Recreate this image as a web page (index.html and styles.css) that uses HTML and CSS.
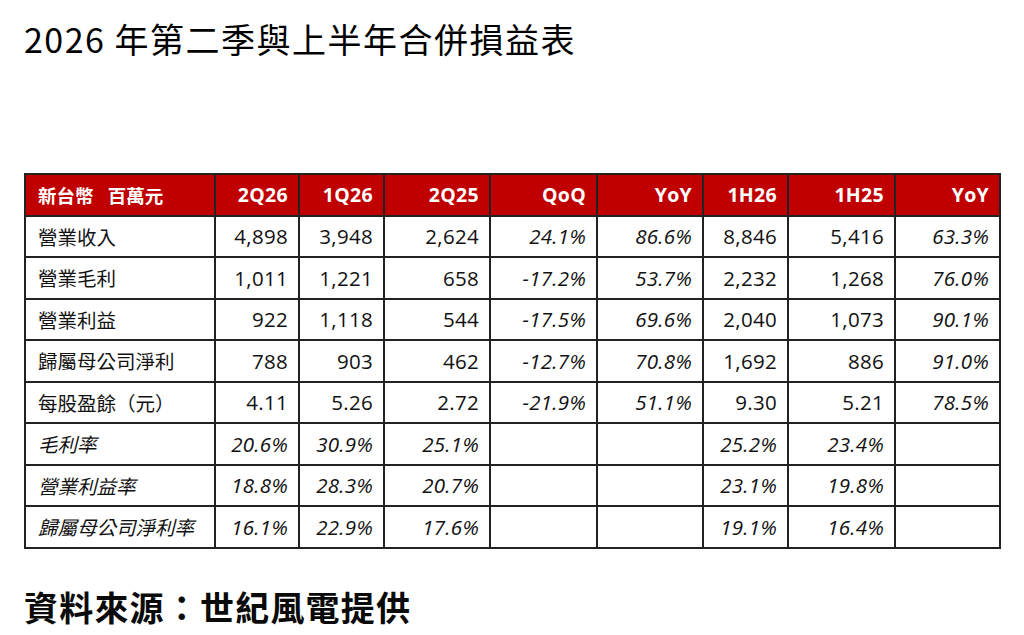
FILE: index.html
```html
<!DOCTYPE html>
<html lang="zh-Hant">
<head>
<meta charset="utf-8">
<title>2026 年第二季與上半年合併損益表</title>
<link rel="stylesheet" href="styles.css">
</head>
<body>
<div class="page">
  <h1 class="title">2026 年第二季與上半年合併損益表</h1>
  <table class="pl">
    <colgroup>
      <col class="c-label"><col class="c-q"><col class="c-q2"><col class="c-w"><col class="c-w2"><col class="c-w"><col class="c-q2"><col class="c-w2"><col class="c-w3">
    </colgroup>
    <thead>
      <tr>
        <th class="label">新台幣 百萬元</th>
        <th>2Q26</th><th>1Q26</th><th>2Q25</th><th>QoQ</th><th>YoY</th><th>1H26</th><th>1H25</th><th>YoY</th>
      </tr>
    </thead>
    <tbody>
      <tr><td class="label">營業收入</td><td>4,898</td><td>3,948</td><td>2,624</td><td class="it">24.1%</td><td class="it">86.6%</td><td>8,846</td><td>5,416</td><td class="it">63.3%</td></tr>
      <tr><td class="label">營業毛利</td><td>1,011</td><td>1,221</td><td>658</td><td class="it">-17.2%</td><td class="it">53.7%</td><td>2,232</td><td>1,268</td><td class="it">76.0%</td></tr>
      <tr><td class="label">營業利益</td><td>922</td><td>1,118</td><td>544</td><td class="it">-17.5%</td><td class="it">69.6%</td><td>2,040</td><td>1,073</td><td class="it">90.1%</td></tr>
      <tr><td class="label">歸屬母公司淨利</td><td>788</td><td>903</td><td>462</td><td class="it">-12.7%</td><td class="it">70.8%</td><td>1,692</td><td>886</td><td class="it">91.0%</td></tr>
      <tr><td class="label">每股盈餘（元）</td><td>4.11</td><td>5.26</td><td>2.72</td><td class="it">-21.9%</td><td class="it">51.1%</td><td>9.30</td><td>5.21</td><td class="it">78.5%</td></tr>
      <tr class="ratio"><td class="label">毛利率</td><td>20.6%</td><td>30.9%</td><td>25.1%</td><td></td><td></td><td>25.2%</td><td>23.4%</td><td></td></tr>
      <tr class="ratio"><td class="label">營業利益率</td><td>18.8%</td><td>28.3%</td><td>20.7%</td><td></td><td></td><td>23.1%</td><td>19.8%</td><td></td></tr>
      <tr class="ratio"><td class="label">歸屬母公司淨利率</td><td>16.1%</td><td>22.9%</td><td>17.6%</td><td></td><td></td><td>19.1%</td><td>16.4%</td><td></td></tr>
    </tbody>
  </table>
  <p class="source">資料來源：世紀風電提供</p>
</div>
</body>
</html>
```
FILE: styles.css
```css
html, body {
  margin: 0;
  padding: 0;
  background: #ffffff;
}
.page {
  padding: 19px 0 0 24px;
  color: #111111;
  font-family: "Noto Sans CJK TC", sans-serif;
}
.title {
  margin: 0;
  font-size: 34px;
  font-weight: 400;
  line-height: 40px;
  letter-spacing: 1.5px;
  color: #000000;
}
.pl {
  margin-top: 114px;
  width: 975px;
  table-layout: fixed;
  border-collapse: collapse;
  font-family: "Open Sans", "Noto Sans CJK TC", sans-serif;
  font-size: 20.5px;
}
.c-label { width: 190px; }
.c-q { width: 84px; }
.c-q2 { width: 85px; }
.c-w { width: 106px; }
.c-w2 { width: 107px; }
.c-w3 { width: 105px; }
.pl th, .pl td {
  border: 2px solid #222222;
  height: 39.5px;
  padding: 0 10px 0 8px;
  text-align: right;
  vertical-align: middle;
  white-space: nowrap;
  letter-spacing: 0.3px;
  line-height: 1;
}
.pl th {
  background: #c00000;
  color: #ffffff;
  font-weight: 700;
  font-size: 19.5px;
}
.pl .label {
  text-align: left;
  padding-left: 12px;
  font-family: "Noto Sans CJK TC", sans-serif;
  font-weight: 400;
  letter-spacing: 0;
  font-size: 19.5px;
}
.pl th.label {
  font-weight: 700;
  font-size: 18.5px;
  word-spacing: 10px;
}
.pl .it, .ratio td {
  font-style: italic;
}
.source {
  margin: 38px 0 0 0;
  font-size: 34px;
  font-weight: 700;
  line-height: 40px;
  letter-spacing: 1.2px;
  color: #0a0a0a;
}
```
